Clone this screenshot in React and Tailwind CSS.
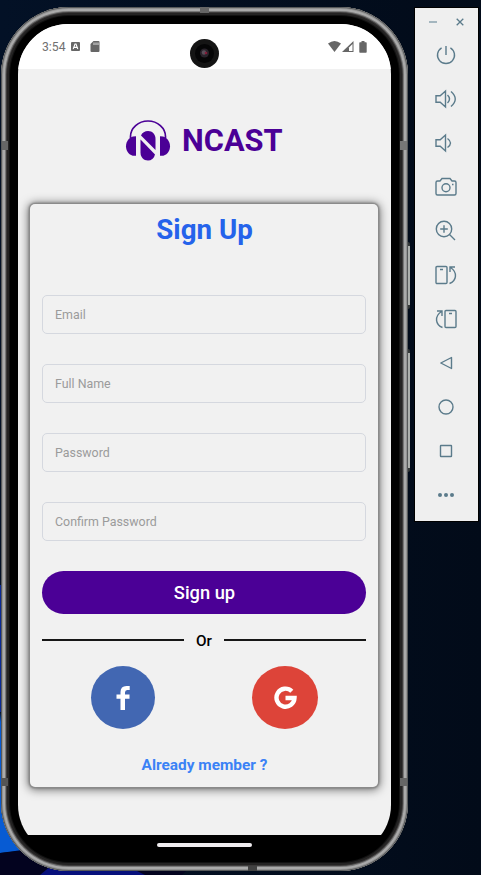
import React from "react";

function Field({ label }) {
  return (
    <div className="flex h-[39px] items-center rounded-[5px] border border-[#d5d8df] pt-px pl-3 text-[12.4px] text-[#9b9b9b]">
      {label}
    </div>
  );
}

function Logo() {
  return (
    <svg className="h-[42px] w-[46px]" viewBox="0 0 46 42" fill="#4b0096">
      <path d="M5.500 18v-1.500a17.500 15.500 0 0 1 35 0V18" fill="none" stroke="#4b0096" strokeWidth="1.700" />
      <path d="M11 16.300v19.500H9.500C4.500 35.800 1 31.500 1 26.200c0-4.700 3-8.500 7-9.700z" />
      <path d="M35 16.300v19.500h1.500c5 0 8.500-4.300 8.500-9.600 0-4.700-3-8.500-7-9.700z" />
      <path d="M16 15.500C17 12.500 20 11 23 11c4.500 0 7.500 3.500 7.500 8v11z" />
      <path d="M15.500 19.500 30 34.500C29 38.500 26.300 40.500 23 40.500c-4.500 0-7.500-3.500-7.500-8z" />
    </svg>
  );
}

function Tool({ children }) {
  return (
    <div className="flex h-11 items-center justify-center">
      <svg className="h-6 w-6" viewBox="0 0 24 24" fill="none" stroke="#5b7b8b" strokeWidth="1.4">
        {children}
      </svg>
    </div>
  );
}

function Toolbar() {
  return (
    <aside className="mt-[7px] ml-[6px] h-[515px] w-[65px] shrink-0 border border-black bg-[#efefef] pr-[2px]">
      <div className="flex h-[25px] items-center justify-between pt-[3px] pr-[12px] pl-[14px]">
        <svg className="h-2 w-2" viewBox="0 0 8 8" stroke="#8ba3af" strokeWidth="1.500"><path d="M0 4h8" /></svg>
        <svg className="h-2 w-2" viewBox="0 0 8 8" stroke="#5b7b8b" strokeWidth="1.300"><path d="m.7.7 6.600 6.600M7.300.7.7 7.300" /></svg>
      </div>
      <Tool><path d="M12 3v9M7.600 4.800a8.500 8.500 0 1 0 8.800 0" /></Tool>
      <Tool><path d="M2 8.800h4.200L11.500 4v16l-5.300-4.800H2zM13.500 8q4 4 0 8M17 4.500q8.500 7.500 0 15" /></Tool>
      <Tool><path d="M2 8.800h4.200L11.500 4v16l-5.300-4.800H2zM13.500 7.500q6 4.500 0 9" /></Tool>
      <Tool>
        <path d="M2 7.500Q2 6 3.500 6H6l2-2.500h8L18 6h2.500Q22 6 22 7.500v11q0 1.500-1.500 1.500h-17Q2 20 2 18.500z" />
        <circle cx="12" cy="12.800" r="4" /><path d="M18 9.500h1.500" />
      </Tool>
      <Tool><circle cx="10" cy="10" r="7.700" /><path d="M10 6.200v7.600M6.200 10h7.600M15.500 15.500l5.500 5.500" /></Tool>
      <Tool>
        <rect x="2" y="3.500" width="11" height="17" rx="1" /><path d="M6 6.500h3M15.500 20.500c7-2.500 8.500-11 1-16M21 4h-5v5" />
      </Tool>
      <Tool>
        <rect x="11" y="3.500" width="11" height="17" rx="1" /><path d="M15 6.500h3M8.500 20.500c-7-2.500-8.500-11-1-16M3 4h5v5" />
      </Tool>
      <Tool><path d="m6.800 12 10.700-5.500v11z" strokeLinejoin="round" /></Tool>
      <Tool><circle cx="12" cy="12" r="7" /></Tool>
      <Tool><rect x="6.500" y="6.500" width="11" height="11" rx=".5" /></Tool>
      <Tool><g fill="#5b7b8b" stroke="none"><circle cx="6" cy="12" r="2" /><circle cx="12" cy="12" r="2" /><circle cx="18" cy="12" r="2" /></g></Tool>
    </aside>
  );
}

function StatusBar() {
  return (
    <div className="flex h-[45px] items-center justify-between bg-white pr-[24px] pl-[24px] text-[12.200px] text-[#707070]">
      <div className="flex items-center pt-px">
        <span className="w-[29px]">3:54</span>
        <svg className="h-[9px] w-[9px]" viewBox="0 0 9 9"><rect width="9" height="9" rx="1" fill="#666" /><path d="m2.200 7 1.800-5h1l1.800 5M3 5.400h3" stroke="white" strokeWidth="1.100" fill="none" /></svg>
        <svg className="ml-[10px] h-[11px] w-[10px]" viewBox="0 0 10 11"><path d="M3.500 0H8.500Q9.500 0 9.500 1v9q0 1-1 1h-7q-1 0-1-1V3z" fill="#666" /><path d="M4 1.500V4M6 1.500V4M8 1.500V4" stroke="white" strokeWidth=".8" /></svg>
      </div>
      <div className="flex items-center">
        <svg className="h-[11px] w-[13px]" viewBox="0 0 13 11"><path d="M0 2.500Q6.500-2.500 13 2.500L6.500 11z" fill="#666" /></svg>
        <svg className="ml-px h-[11px] w-[12px]" viewBox="0 0 12 11"><path d="M0 11 11.500 0v11z" fill="#666" /><path d="M7 6.500 10.500 3v7H7z" fill="white" /></svg>
        <svg className="ml-[5px] h-[12px] w-[8px]" viewBox="0 0 8 12"><path d="M2.500 0h3v1.300H7q.7 0 .7.700v9q0 .8-.7.800H1q-.7 0-.7-.8V2q0-.7.700-.7h1.500z" fill="#666" /></svg>
      </div>
    </div>
  );
}

function Camera() {
  return (
    <svg className="absolute top-[32px] left-[189px] h-[29px] w-[29px]" viewBox="0 0 29 29">
      <circle cx="14.500" cy="14.500" r="14.500" fill="#141414" />
      <circle cx="14.500" cy="14.500" r="9.500" fill="#050506" />
      <circle cx="14.500" cy="14" r="4.500" fill="#29232b" />
      <circle cx="14" cy="13.500" r="2.200" fill="#59505b" />
      <circle cx="16" cy="14" r="1.300" fill="#831c38" />
    </svg>
  );
}

function SignUpCard() {
  return (
    <section className="ml-[12px] flex h-[583px] w-[348px] flex-col rounded-[5px] bg-[#f1f1f1] px-3 shadow-[0_0_1px_1px_#8c8c8c,0_0_3px_1px_rgba(0,0,0,0.35),0_1px_10px_2px_rgba(0,0,0,0.5)]">
      <h2 className="mt-[8px] pl-px text-center text-[27.700px] leading-9 font-bold text-[#2563eb]">Sign Up</h2>
      <div className="mt-[47px] flex flex-col gap-[30px]">
        <Field label="Email" />
        <Field label="Full Name" />
        <Field label="Password" />
        <Field label="Confirm Password" />
      </div>
      <button className="mt-[30px] h-[43px] shrink-0 rounded-full bg-[#4b0096] pt-px pl-px text-[18.300px] font-medium text-white">Sign up</button>
      <div className="mt-[14px] flex h-6 items-center justify-between text-[15.300px] font-medium text-black">
        <div className="h-[2px] w-[142px] bg-[#161616]" />
        <span className="pt-[3px]">Or</span>
        <div className="h-[2px] w-[142px] bg-[#161616]" />
      </div>
      <div className="mt-[14px] flex justify-between pr-[48px] pl-[49px]">
        <div className="flex h-[63px] w-[64px] items-center justify-center rounded-[50%] bg-[#4267b2]">
          <svg className="h-[24px] w-[14px]" viewBox="0 0 14 24" fill="white"><path d="M4.500 24V12.800H.5V8.500h4V6Q4.500 0 10.500 0h3.200v4h-2.500Q9 4 9 6.500v2h4.500V12.800H9V24z" /></svg>
        </div>
        <div className="flex h-[63px] w-[66px] items-center justify-center rounded-[50%] bg-[#dd4439]">
          <svg className="h-[23px] w-[23px]" viewBox="0 0 23 23"><path d="M17.800 5.200A9 9 0 1 0 20.500 12H11.500" fill="none" stroke="white" strokeWidth="4.400" /></svg>
        </div>
      </div>
      <a className="mt-[24px] pl-px text-center text-[15.400px] leading-6 font-bold text-[#3b82f6]">Already member ?</a>
    </section>
  );
}

function Phone() {
  return (
    <div className="relative mt-[7px] ml-[1px] h-[864px] w-[407px] shrink-0 rounded-[68px] bg-black px-[17px] pt-[17px] pb-[16px] shadow-[inset_0_0_0_1px_#57595a,inset_0_0_0_2px_#929292,inset_0_0_0_4px_#aaaaaa,inset_0_0_0_5px_#777777,inset_0_0_0_6px_#3d3b3b,inset_0_0_0_8px_#242323,inset_0_0_0_9px_#111111]">
      <div className="absolute top-0 left-[199px] h-[6px] w-[9px] bg-[#666]" />
      <div className="absolute bottom-0 left-[247px] h-[5px] w-[9px] bg-[#424242]" />
      <div className="absolute top-[134px] left-px h-[9px] w-[6px] bg-[#666]" />
      <div className="absolute top-[134px] right-px h-[9px] w-[7px] bg-[#777]" />
      <div className="absolute top-[771px] left-px h-[8px] w-[6px] bg-[#555]" />
      <div className="absolute top-[771px] right-px h-[8px] w-[7px] bg-[#666]" />
      <div className="absolute top-[235px] -right-[2px] h-[67px] w-[2px] rounded-r-sm border-y-4 border-y-[#343838] bg-[#adb0ad]" />
      <div className="absolute top-[342px] -right-[2px] h-[123px] w-[2px] rounded-r-sm border-y-4 border-y-[#343838] bg-[#adb0ad]" />
      <div className="h-[831px] overflow-hidden rounded-[50px] bg-black">
        <div className="h-[811px] overflow-hidden bg-[#f1f1f1]">
          <StatusBar />
          <div className="flex h-[135px] items-center pt-[8px] pl-[107px]">
            <Logo />
            <h1 className="mt-[2px] ml-[11px] text-[30.800px] font-bold text-[#4b0096]">NCAST</h1>
          </div>
          <SignUpCard />
        </div>
        <div className="flex h-5 justify-center pt-[8px]">
          <div className="h-[4px] w-[95px] rounded-full bg-[#f0edf0]" />
        </div>
      </div>
      <Camera />
    </div>
  );
}

export default function App() {
  return (
    <main className="relative flex h-[875px] w-[481px] items-start overflow-hidden bg-gradient-to-r from-[#031126] to-[#020b19] font-['Roboto',sans-serif]">
      <svg className="absolute top-0 left-0 h-[875px] w-[260px]" viewBox="0 0 260 875">
        <path d="M0 585H4V712H0z" fill="#0a2a96" />
        <path d="M0 712Q5 780 30 850L0 853z" fill="#075bd3" />
        <path d="M0 853 30 849 70 860 190 867 182 875H0z" fill="#03031f" />
        <path d="m40 875 18-15 65 4 22 11z" fill="#07107c" />
      </svg>
      <Phone />
      <Toolbar />
    </main>
  );
}
